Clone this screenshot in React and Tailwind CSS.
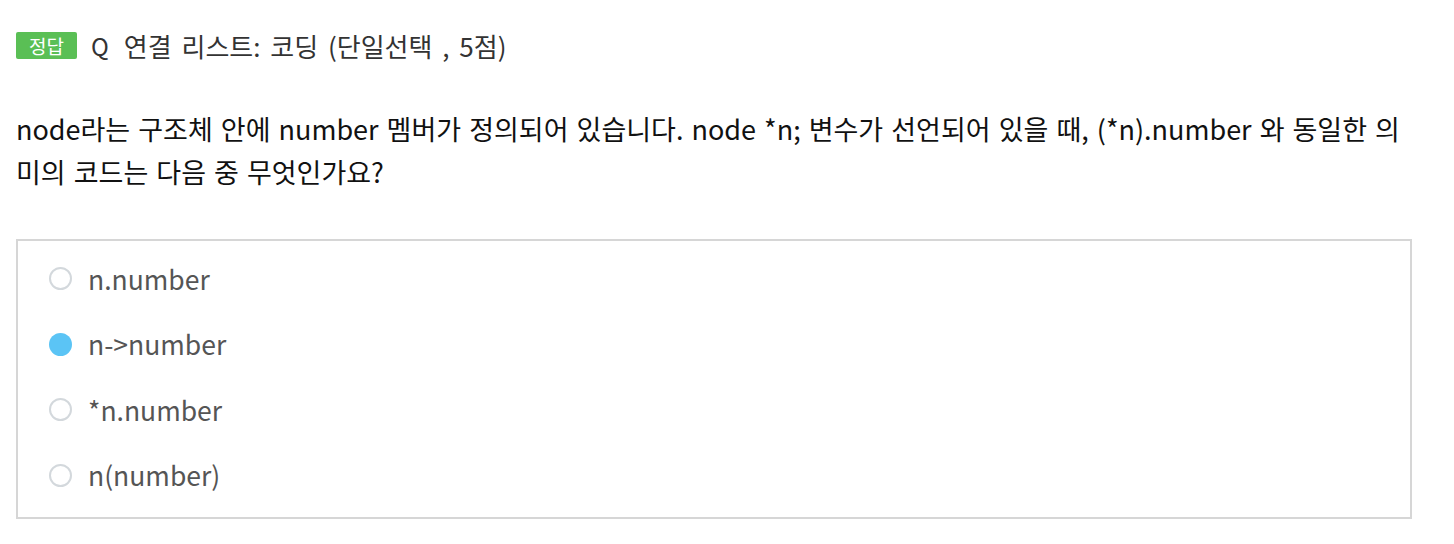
import React from 'react';

const options = [
  { label: 'n.number', checked: false },
  { label: 'n->number', checked: true },
  { label: '*n.number', checked: false },
  { label: 'n(number)', checked: false },
];

function App() {
  return (
    <div
      className="w-full min-h-screen bg-white px-4 pt-[32px]"
      style={{ fontFamily: '"Noto Sans CJK KR", "Noto Sans", sans-serif' }}
    >
      {/* 문제 제목 */}
      <div className="flex items-center h-[27px]">
        <span className="inline-flex items-center justify-center w-[61px] h-[27px] rounded-[2px] bg-[#5abf55] text-white text-[19px] leading-none">
          정답
        </span>
        <span className="ml-[14px] text-[24px] text-[#333] leading-none">Q</span>
        <span className="ml-[15px] text-[26px] text-[#333] leading-none [word-spacing:4px]">
          연결 리스트: 코딩 (단일선택 , 5점)
        </span>
      </div>

      {/* 문제 본문 */}
      <p className="mt-[48px] w-[1392px] text-[27px] leading-[43px] text-[#111] break-all [word-spacing:2px]">
        node라는 구조체 안에 number 멤버가 정의되어 있습니다. node *n; 변수가 선언되어 있을 때, (*n).number 와 동일한 의미의 코드는 다음 중 무엇인가요?
      </p>

      {/* 보기 */}
      <div className="mt-[46px] w-[1396px] border-2 border-[#d6d6d6] pt-[5px] pb-[9px]">
        {options.map((opt) => (
          <div key={opt.label} className="flex items-center h-[65.5px] pl-[31px]">
            {opt.checked ? (
              <span className="w-[23px] h-[23px] rounded-full bg-[#5bc4f5]" />
            ) : (
              <span className="w-[23px] h-[23px] rounded-full border-2 border-[#d3d8dc] bg-white" />
            )}
            <span className="ml-[16px] text-[26.5px] text-[#555] leading-none">{opt.label}</span>
          </div>
        ))}
      </div>
    </div>
  );
}

export default App;
